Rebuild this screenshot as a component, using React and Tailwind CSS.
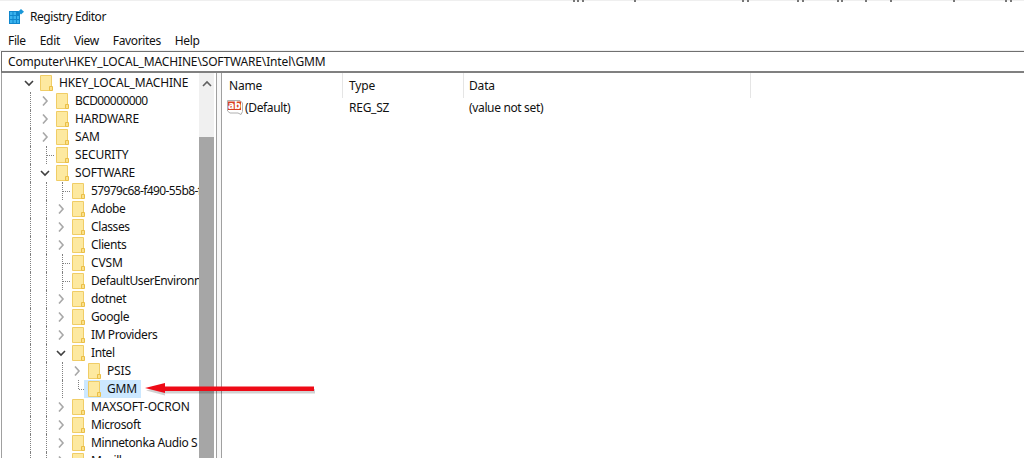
const TREE = [
  { name: 'HKEY_LOCAL_MACHINE', depth: 0, state: 'open' },
  { name: 'BCD00000000', depth: 1, state: 'closed', digits: true },
  { name: 'HARDWARE', depth: 1, state: 'closed' },
  { name: 'SAM', depth: 1, state: 'closed' },
  { name: 'SECURITY', depth: 1, state: 'leaf' },
  { name: 'SOFTWARE', depth: 1, state: 'open' },
  { name: '57979c68-f490-55b8-f', depth: 2, state: 'leaf', digits: true },
  { name: 'Adobe', depth: 2, state: 'closed', tight: true },
  { name: 'Classes', depth: 2, state: 'closed', tight: true },
  { name: 'Clients', depth: 2, state: 'closed', tight: true },
  { name: 'CVSM', depth: 2, state: 'leaf' },
  { name: 'DefaultUserEnvironn', depth: 2, state: 'leaf', tight: true },
  { name: 'dotnet', depth: 2, state: 'closed', tight: true },
  { name: 'Google', depth: 2, state: 'closed', tight: true },
  { name: 'IM Providers', depth: 2, state: 'closed', tight: true },
  { name: 'Intel', depth: 2, state: 'open', tight: true },
  { name: 'PSIS', depth: 3, state: 'closed' },
  { name: 'GMM', depth: 3, state: 'last', selected: true },
  { name: 'MAXSOFT-OCRON', depth: 2, state: 'closed' },
  { name: 'Microsoft', depth: 2, state: 'closed', tight: true },
  { name: 'Minnetonka Audio S', depth: 2, state: 'closed', tight: true },
  { name: 'Mozilla', depth: 2, state: 'closed', tight: true },
];

const TOP_MARKS = [573, 577, 582, 634, 742, 747, 797, 802, 837, 841, 865, 890, 953, 1005, 1010];

function Folder() {
  return (
    <svg width="13" height="16" viewBox="0 0 13 16" className="shrink-0">
      <path d="M0.5 0.5H11.5V15.5H0.5Z" fill="#fde9a0" stroke="#f0cd66" />
      <path d="M9.5 15.5V11.5H12.5V15.5Z" fill="#fbe08a" stroke="#eabf47" />
    </svg>
  );
}

function Indent() {
  return (
    <div className="h-full w-[16px] shrink-0 pl-[6px]">
      <div className="h-full border-l border-dotted border-[#808080]" />
    </div>
  );
}

function Expander({ state }) {
  if (state === 'open') {
    return (
      <svg width="16" height="10" viewBox="0 0 16 10">
        <path d="M1 3L5 7L9 3" fill="none" stroke="#404040" strokeWidth="1.6" />
      </svg>
    );
  }
  if (state === 'closed') {
    return (
      <svg width="16" height="10" viewBox="0 0 16 10">
        <path d="M3 0.5L7 5L3 9.5" fill="none" stroke="#a8a8a8" strokeWidth="1.6" />
      </svg>
    );
  }
  // leaf rows: dotted T, last child: dotted L
  return (
    <div className="flex h-full w-[16px] pl-[6px]">
      <div className={`${state === 'last' ? 'h-1/2' : 'h-full'} border-l border-dotted border-[#808080]`} />
      <div className="mt-[9px] h-0 w-[7px] border-t border-dotted border-[#808080]" />
    </div>
  );
}

function TreeRow({ item }) {
  const indents = Array.from({ length: item.depth });
  return (
    <div className="flex h-[18px] items-center pl-[22px]">
      {indents.map((_, i) => (
        <Indent key={i} />
      ))}
      <div className="flex h-full w-[16px] shrink-0 items-center">
        <Expander state={item.state} />
      </div>
      <div className={`-ml-[4px] flex h-full items-center pl-[4px] ${item.selected ? 'bg-[#cce8ff]' : ''}`}>
        <Folder />
        <span
          className={`whitespace-nowrap pl-[6px] pr-[4px] ${item.tight ? 'tracking-[-0.4px]' : ''} ${item.digits ? 'tracking-[-0.6px]' : ''}`}
        >
          {item.name}
        </span>
      </div>
    </div>
  );
}

function AppIcon() {
  return (
    <svg width="15" height="15" viewBox="0 0 15 15">
      <path d="M0 2H11V15H0Z" fill="#0f86cc" />
      <path d="M1 3H3.5V6H1ZM4.5 3H7V6H4.5ZM1 7H3.5V10H1ZM4.5 7H7V10H4.5ZM8 7H10V10H8ZM1 11H3.5V14H1ZM4.5 11H7V14H4.5ZM8 11H10V14H8Z" fill="#39b3ee" />
      <path d="M12 0L15 2.8L12 5.6L9 2.8Z" fill="#1997d8" />
    </svg>
  );
}

function StringIcon() {
  return (
    <svg width="16" height="16" viewBox="0 0 16 16" className="shrink-0">
      <path d="M0.5 0.5H13L15.5 3V11.5L14 14.5L11 13H3L0.5 11Z" fill="#fff" stroke="#b0b0b0" />
      <rect x="1" y="1.5" width="13" height="8.5" fill="#d9411f" />
      <text x="7.5" y="9" textAnchor="middle" fontSize="10.5" fontWeight="800" fill="#fff">ab</text>
    </svg>
  );
}

export default function App() {
  return (
    <div className="relative flex h-[458px] w-[1024px] flex-col overflow-hidden bg-white font-['Noto_Sans','Open_Sans',sans-serif] text-[12px] tracking-[-0.15px] text-[#111]">
      <div className="h-px bg-[#efefef]" />
      <div className="flex h-[31px] items-center gap-[6px] pl-[9px]">
        <AppIcon />
        <span className="tracking-[-0.45px]">Registry Editor</span>
      </div>
      <div className="flex h-[18px] items-center gap-[14px] pl-[8px] tracking-[-0.35px]">
        <span>File</span>
        <span>Edit</span>
        <span>View</span>
        <span>Favorites</span>
        <span>Help</span>
      </div>
      <div className="h-px bg-[#f0f0f0]" />
      <div className="ml-px flex h-[22px] items-center border-t border-b-2 border-l border-t-[#707070] border-b-[#808080] border-l-[#707070] pl-[6px]">
        Computer\HKEY_LOCAL_MACHINE\SOFTWARE\Intel\GMM
      </div>
      <div className="flex min-h-0 flex-1">
        <div className="flex w-[216px] shrink-0 overflow-hidden pl-px">
          <div className="w-[198px] shrink-0 overflow-hidden border-l border-[#a0a0a0] pt-px">
            {TREE.map((item) => (
              <TreeRow key={item.name} item={item} />
            ))}
          </div>
          <div className="flex w-[15px] shrink-0 flex-col bg-[#f0f0f0]">
            <div className="flex h-[19px] items-center justify-center pt-[2px]">
              <svg width="10" height="8" viewBox="0 0 10 8">
                <path d="M1 6L5 2L9 6" fill="none" stroke="#606060" strokeWidth="1.6" />
              </svg>
            </div>
            <div className="mt-[45px] flex-1 bg-[#a6a6a6]" />
          </div>
        </div>
        <div className="w-[6px] shrink-0 border-x border-[#a0a0a0] bg-[#f8f8f8]" />
        <div className="min-w-0 flex-1">
          <div className="flex h-[25px] items-center">
            <div className="flex h-full w-[121px] items-center border-r border-[#e5e5e5] pl-[7px]">Name</div>
            <div className="flex h-full w-[121px] items-center border-r border-[#e5e5e5] pl-[6px]">Type</div>
            <div className="flex h-full w-[287px] items-center border-r border-[#e5e5e5] pl-[5px]">Data</div>
          </div>
          <div className="mt-px flex h-[18px] items-center">
            <div className="flex w-[121px] items-center gap-[2px] pl-[5px]">
              <StringIcon />
              <span className="tracking-[-0.35px]">(Default)</span>
            </div>
            <div className="w-[121px] pl-[6px] tracking-[-0.25px]">REG_SZ</div>
            <div className="pl-[5px] tracking-[-0.35px]">(value not set)</div>
          </div>
        </div>
      </div>
      {/* annotation arrow drawn over the window */}
      <svg className="absolute left-[143px] top-[380px]" width="174" height="18" viewBox="0 0 174 18">
        <path d="M3 9L22 4V7.5H172V12H22V14Z" fill="#000" opacity="0.18" transform="translate(0 1.5)" />
        <path d="M2 8L22 3V6.5H171V11H22V13Z" fill="#ee0a16" />
      </svg>
      {/* bits of the window above, cut off at the top edge */}
      <svg className="absolute left-0 top-0" width="1024" height="2" viewBox="0 0 1024 2">
        {TOP_MARKS.map((x) => (
          <rect key={x} x={x} y="0" width="2" height="2" fill="#777" />
        ))}
      </svg>
    </div>
  );
}
